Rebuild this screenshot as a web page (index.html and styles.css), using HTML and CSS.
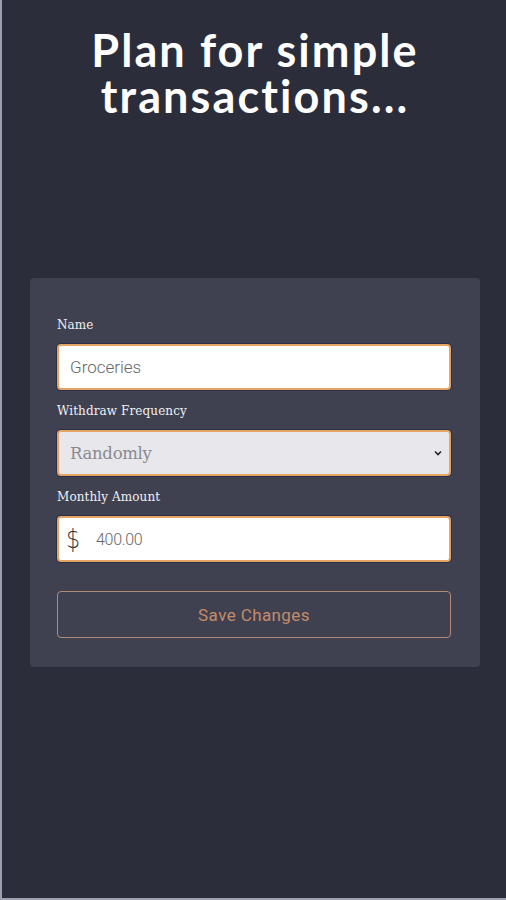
FILE: index.html
```html
<!DOCTYPE html>
<html lang="en">
<head>
<meta charset="utf-8">
<title>Plan for simple transactions</title>
<link rel="stylesheet" href="styles.css">
</head>
<body>
<main class="page">
  <h1 class="title"><span class="title-line">Plan for simple</span><span class="title-line">transactions...</span></h1>
  <form class="card">
    <label class="field-label" for="name">Name</label>
    <input class="field" id="name" type="text" value="Groceries">
    <label class="field-label" for="freq">Withdraw Frequency</label>
    <div class="select-wrap">
      <select class="field select" id="freq">
        <option>Randomly</option>
      </select>
      <svg class="chevron" width="8" height="6" viewBox="0 0 8 6"><path d="M1 1.5 L4 4.5 L7 1.5" fill="none" stroke="#222" stroke-width="1.6"/></svg>
    </div>
    <label class="field-label" for="amount">Monthly Amount</label>
    <div class="field amount">
      <span class="dollar">$</span>
      <input class="amount-input" id="amount" type="text" value="400.00">
    </div>
    <button class="save" type="button">Save Changes</button>
  </form>
</main>
</body>
</html>
```
FILE: styles.css
```css
html, body {
  margin: 0;
  padding: 0;
  height: 100%;
}
body {
  background: #2b2d3b;
  border-left: 2px solid #9c9eb2;
  border-bottom: 2px solid #9c9eb2;
  box-sizing: border-box;
  font-family: Roboto, "Noto Sans", sans-serif;
}
.page {
  padding: 27px 26px 0 28px;
}
.title {
  margin: 0;
  text-align: center;
  color: #ffffff;
  font-family: Lato, "Open Sans", sans-serif;
  font-weight: 700;
  font-size: 45px;
  letter-spacing: 2.1px;
  display: flex;
  flex-direction: column;
  align-items: center;
}
.title-line {
  display: block;
  line-height: 46px;
  height: 46px;
}
.card {
  margin-top: 159px;
  background: #3f4150;
  border-radius: 4px;
  padding: 39px 29px 29px 27px;
  display: flex;
  flex-direction: column;
}
.field-label {
  font-family: "DejaVu Serif", serif;
  font-size: 12px;
  color: #f0f0f4;
  line-height: 16px;
  margin-bottom: 11px;
  letter-spacing: 0.1px;
}
.field {
  box-sizing: border-box;
  height: 46px;
  border: 2px solid #e5a463;
  border-radius: 4px;
  box-shadow: 0 0 0 1px #2a3048;
  background: #ffffff;
  font-family: Roboto, sans-serif;
  font-weight: 300;
  font-size: 17px;
  color: #666666;
  padding: 0 11px;
  margin-bottom: 13px;
  width: 100%;
  outline: none;
}
.select-wrap {
  position: relative;
}
.select {
  appearance: none;
  -webkit-appearance: none;
  background: #e8e8ec;
  font-family: "DejaVu Serif", serif;
  font-weight: 400;
  font-size: 16.5px;
  color: #8a8a8e;
  letter-spacing: -0.3px;
}
.chevron {
  position: absolute;
  right: 9px;
  top: 20px;
}
.amount {
  display: flex;
  align-items: center;
  padding: 0 0 0 7px;
}
.dollar {
  font-family: "DejaVu Sans", sans-serif;
  font-weight: 300;
  font-size: 26px;
  color: #333333;
  width: 30px;
  transform: scaleX(0.85);
  transform-origin: left center;
}
.amount-input {
  border: none;
  outline: none;
  background: transparent;
  flex: 1;
  font-family: Roboto, sans-serif;
  font-weight: 300;
  font-size: 16px;
  color: #666666;
  padding: 0;
  letter-spacing: -0.3px;
}
.save {
  margin-top: 16px;
  height: 47px;
  background: transparent;
  border: 1px solid #b08c78;
  border-radius: 4px;
  color: #c48c6a;
  font-family: Roboto, sans-serif;
  font-weight: 400;
  font-size: 17px;
  letter-spacing: 0.4px;
}
```
